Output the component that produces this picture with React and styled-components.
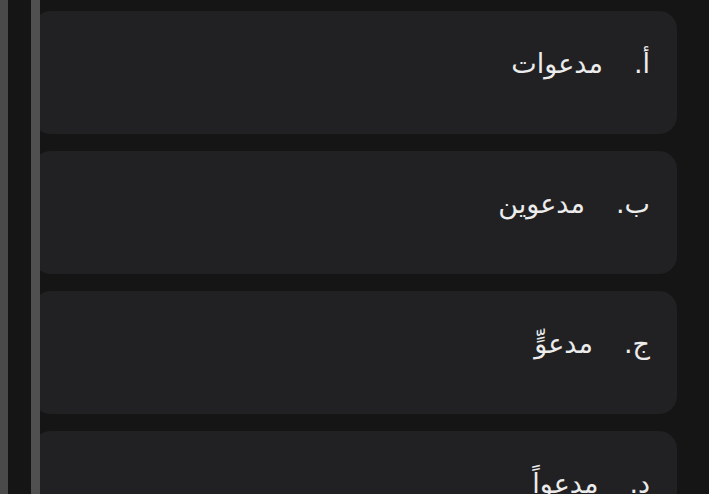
import React from "react";
import styled, { createGlobalStyle } from "styled-components";

const Global = createGlobalStyle`
  html, body { margin: 0; padding: 0; background: #151515; }
  body { font-family: "DejaVu Sans", sans-serif; overflow: hidden; }
`;

const Page = styled.div`
  position: relative;
  width: 709px;
  height: 494px;
  display: flex;
  background: #151515;
  overflow: hidden;
`;

const EdgeStrip = styled.div`
  width: 8px;
  flex: none;
  background: #4a4a4a;
`;

const List = styled.div`
  flex: 1;
  display: flex;
  flex-direction: column;
  gap: 17px;
  padding: 11px 32px 0 25px;
`;

const Card = styled.div`
  flex: none;
  height: 123px;
  border-radius: 18px;
  background: #212123;
  display: flex;
  align-items: center;
  gap: 31px;
  direction: rtl;
  padding: 0 27px 18px 0;
  box-sizing: border-box;
  color: #ececec;
  font-size: 27px;
`;

const Letter = styled.span`
  flex: none;
  font-family: "DejaVu Sans", sans-serif;
`;

const Word = styled.span`
  font-family: "DejaVu Sans", sans-serif;
`;

const Bar = styled.div`
  position: absolute;
  left: 31px;
  top: 0;
  width: 9px;
  height: 100%;
  background: #505050;
`;

const options = [
  ["أ.", "مدعوات"],
  ["ب.", "مدعوين"],
  ["ج.", "مدعوٍّ"],
  ["د.", "مدعواً"],
];

export default function App() {
  return (
    <>
      <Global />
      <Page>
        <EdgeStrip />
        <List>
          {options.map(([l, w]) => (
            <Card key={l}>
              <Letter>{l}</Letter>
              <Word>{w}</Word>
            </Card>
          ))}
        </List>
        <Bar />
      </Page>
    </>
  );
}
